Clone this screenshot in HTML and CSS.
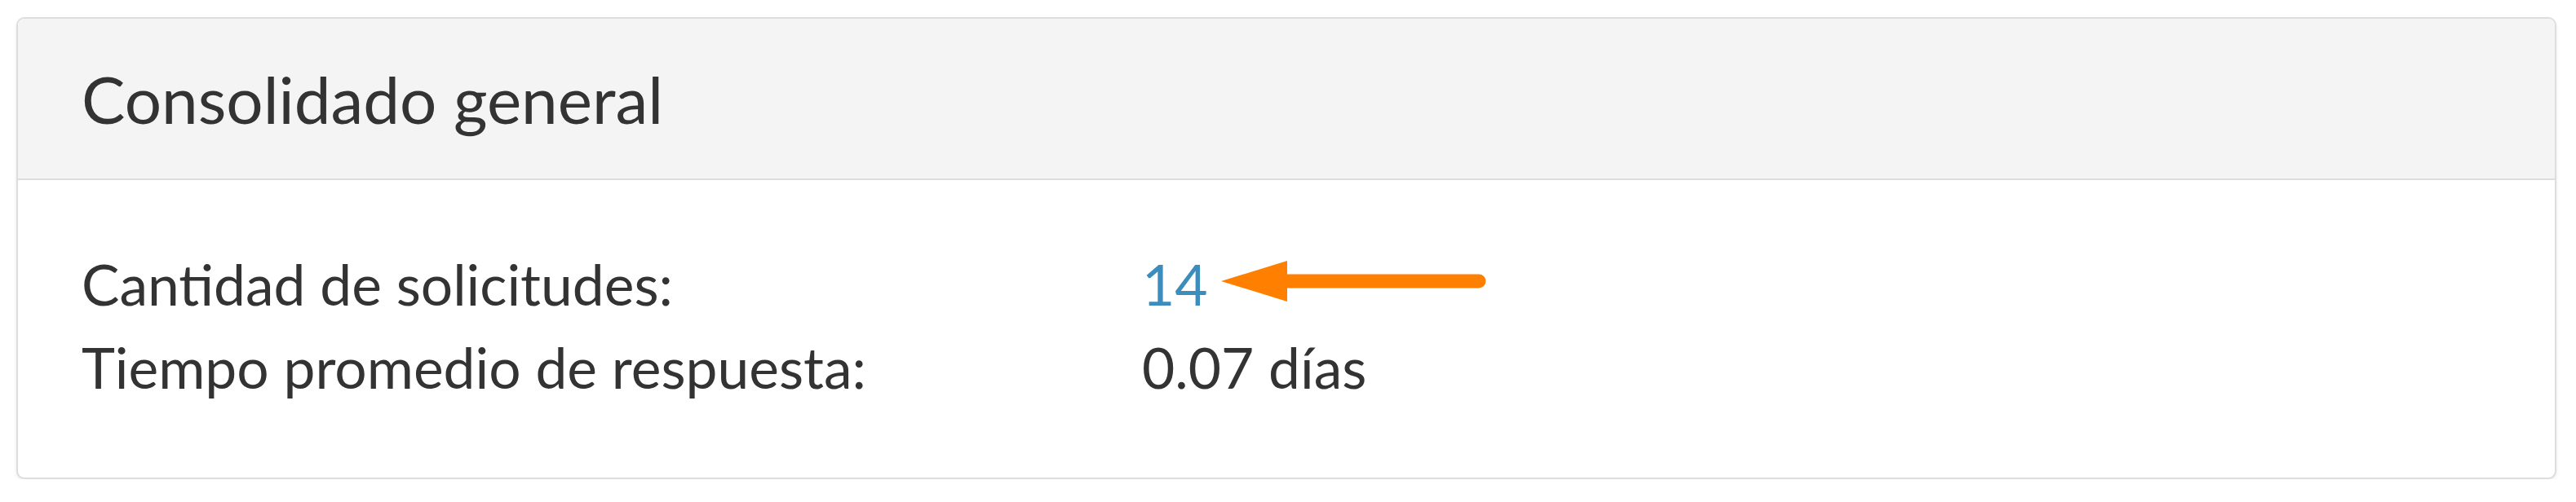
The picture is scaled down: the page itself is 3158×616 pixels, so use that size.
FILE: index.html
```html
<!DOCTYPE html>
<html lang="es">
<head>
<meta charset="utf-8">
<title>Consolidado general</title>
<link rel="stylesheet" href="styles.css">
</head>
<body>
<section class="panel">
  <header class="panel-heading">
    <h3 class="panel-title">Consolidado general</h3>
  </header>
  <div class="panel-body">
    <dl class="stats">
      <dt class="stat-label">Cantidad de solicitudes:</dt>
      <dd class="stat-value">
        <a class="stat-link" href="#">14</a><svg class="annot-arrow" width="325" height="50" viewBox="0 0 325 50" aria-hidden="true"><path d="M0 25 L81 0 L81 50 Z" fill="#ff7f00"/><line x1="78" y1="25" x2="316" y2="25" stroke="#ff7f00" stroke-width="17" stroke-linecap="round"/></svg>
      </dd>
      <dt class="stat-label">Tiempo promedio de respuesta:</dt>
      <dd class="stat-value">0.07 días</dd>
    </dl>
  </div>
</section>
</body>
</html>
```
FILE: styles.css
```css
html, body {
  margin: 0;
  padding: 0;
  background: #ffffff;
}

body {
  padding: 21px 24px 0 20px;
  font-family: Lato, "Open Sans", "Liberation Sans", sans-serif;
  color: #333333;
}

.panel {
  border: 2px solid #dddddd;
  border-radius: 10px;
  background: #ffffff;
  box-shadow: 0 2px 4px rgba(0, 0, 0, 0.08);
  overflow: hidden;
}

.panel-heading {
  height: 196px;
  display: flex;
  align-items: center;
  padding: 0 0 0 78px;
  background: #f4f4f4;
  border-bottom: 2px solid #dddddd;
}

.panel-title {
  margin: 0;
  font-size: 80px;
  font-weight: 400;
  line-height: 1.2;
  color: #333333;
}

.panel-body {
  padding: 76px 0 85px 78px;
}

.stats {
  display: grid;
  grid-template-columns: 1300px auto;
  margin: 0;
  font-size: 69.5px;
  line-height: 102px;
}

.stat-label,
.stat-value {
  margin: 0;
  white-space: nowrap;
}

.stat-value {
  display: flex;
  align-items: center;
}

.stat-link {
  color: #3c8dbc;
  text-decoration: none;
}

.annot-arrow {
  display: block;
  margin-left: 16px;
  margin-top: -6px;
}
```
